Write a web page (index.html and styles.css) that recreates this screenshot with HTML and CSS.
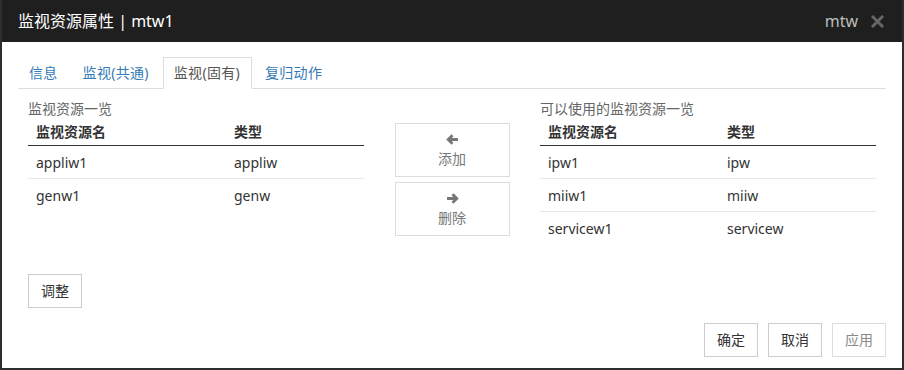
FILE: index.html
```html
<!DOCTYPE html>
<html lang="zh-CN">
<head>
  <meta charset="UTF-8">
  <meta name="viewport" content="width=device-width, initial-scale=1.0">
  <title>监视资源属性 | mtw1</title>
  <link rel="stylesheet" href="styles.css">
</head>
<body>
  <div class="dialog">
    <!-- Title bar -->
    <div class="dialog-header">
      <span class="dialog-title">监视资源属性 | mtw1</span>
      <span class="dialog-user">mtw</span>
      <span class="dialog-close">
        <svg width="13" height="13" viewBox="0 0 13 13">
          <path d="M2 2 L11 11 M11 2 L2 11" stroke="#666" stroke-width="3" stroke-linecap="square"/>
        </svg>
      </span>
    </div>

    <!-- Tabs -->
    <ul class="nav-tabs">
      <li><a href="#">信息</a></li>
      <li><a href="#">监视(共通)</a></li>
      <li class="active"><a href="#">监视(固有)</a></li>
      <li><a href="#">复归动作</a></li>
    </ul>

    <div class="tab-panel">
      <div class="monitor-grid">
        <!-- Selected monitors -->
        <div class="monitor-list">
          <div class="list-caption">监视资源一览</div>
          <table class="list-table left">
            <thead>
              <tr><th>监视资源名</th><th>类型</th></tr>
            </thead>
            <tbody>
              <tr><td>appliw1</td><td>appliw</td></tr>
              <tr><td>genw1</td><td>genw</td></tr>
            </tbody>
          </table>
        </div>

        <!-- Move buttons -->
        <div class="move-buttons">
          <button class="move-btn" type="button">
            <span class="move-icon">
              <svg width="13" height="11" viewBox="0 0 13 11">
                <path d="M12 5.5 H2.5 M6.5 1.2 L2.2 5.5 L6.5 9.8" fill="none" stroke="#777" stroke-width="2.8"/>
              </svg>
            </span>
            <span class="move-label">添加</span>
          </button>
          <button class="move-btn" type="button">
            <span class="move-icon">
              <svg width="13" height="11" viewBox="0 0 13 11">
                <path d="M1 5.5 H10.5 M6.5 1.2 L10.8 5.5 L6.5 9.8" fill="none" stroke="#777" stroke-width="2.8"/>
              </svg>
            </span>
            <span class="move-label">删除</span>
          </button>
        </div>

        <!-- Available monitors -->
        <div class="monitor-list">
          <div class="list-caption">可以使用的监视资源一览</div>
          <table class="list-table right">
            <thead>
              <tr><th>监视资源名</th><th>类型</th></tr>
            </thead>
            <tbody>
              <tr><td>ipw1</td><td>ipw</td></tr>
              <tr><td>miiw1</td><td>miiw</td></tr>
              <tr><td>servicew1</td><td>servicew</td></tr>
            </tbody>
          </table>
        </div>
      </div>

      <button class="btn adjust-btn" type="button">调整</button>
    </div>

    <!-- Footer -->
    <div class="dialog-footer">
      <button class="btn" type="button">确定</button>
      <button class="btn" type="button">取消</button>
      <button class="btn" type="button" disabled>应用</button>
    </div>
  </div>
</body>
</html>
```

FILE: styles.css
```css
* {
  box-sizing: border-box;
}
body {
  margin: 0;
  background: #fff;
  font-family: "Noto Sans", "Noto Sans CJK SC", sans-serif;
  font-size: 14px;
  line-height: 20px;
  color: #333;
}
.dialog {
  width: 904px;
  height: 370px;
  border: 2px solid #2e2e2e;
  border-top: 0;
  padding: 0 16px;
  display: flex;
  flex-direction: column;
}
.dialog-header {
  height: 42px;
  margin: 0 -16px;
  padding: 0 18px 0 16px;
  background: #1f1f1f;
  display: flex;
  align-items: center;
}
.dialog-title {
  flex: 1;
  font-size: 16px;
  color: #fff;
}
.dialog-user {
  font-size: 16px;
  color: #bdbdbd;
  margin-right: 13px;
}
.dialog-close {
  display: flex;
}

/* tabs */
.nav-tabs {
  list-style: none;
  margin: 15px 0 0;
  padding: 0;
  display: flex;
  border-bottom: 1px solid #ddd;
}
.nav-tabs li {
  margin: 0 2px -1px 0;
}
.nav-tabs a {
  display: block;
  padding: 5px 11px 5px 10px;
  border: 1px solid transparent;
  color: #337ab7;
  text-decoration: none;
  letter-spacing: 0.3px;
}
.nav-tabs li.active a {
  color: #555;
  background: #fff;
  border-color: #ddd #ddd transparent;
}

.tab-panel {
  padding: 10px 10px 0;
}
.monitor-grid {
  display: grid;
  grid-template-columns: 336px 115px 336px;
  justify-content: space-between;
}
.list-caption {
  color: #666;
}
.list-table {
  width: 100%;
  border-collapse: collapse;
}
.list-table th {
  text-align: left;
  font-weight: bold;
  padding: 3px 8px;
  border-bottom: 1px solid #333;
}
.list-table td {
  padding: 7px 8px 5px;
}
.list-table tbody tr + tr td {
  border-top: 1px solid #e8e8e8;
}
.list-table.left th:first-child {
  width: 198px;
}
.list-table.right th:first-child {
  width: 179px;
}

.move-buttons {
  padding-top: 24px;
  display: flex;
  flex-direction: column;
  gap: 5px;
}
.move-btn {
  height: 54px;
  padding: 6px 0 0;
  border: 1px solid #ddd;
  background: #fff;
  font: inherit;
  color: #777;
  display: flex;
  flex-direction: column;
  align-items: center;
}
.move-icon {
  height: 18px;
  display: flex;
  align-items: center;
}
.move-label {
  line-height: 22px;
}

.btn {
  width: 54px;
  height: 34px;
  padding: 6px 0;
  border: 1px solid #ccc;
  background: #fff;
  font: inherit;
  color: #333;
}
.btn:disabled {
  color: #8a8a8a;
  border-color: #ddd;
}
.adjust-btn {
  display: block;
  margin-top: 30px;
}
.dialog-footer {
  margin-top: 15px;
  display: flex;
  justify-content: flex-end;
  gap: 10px;
}
```
